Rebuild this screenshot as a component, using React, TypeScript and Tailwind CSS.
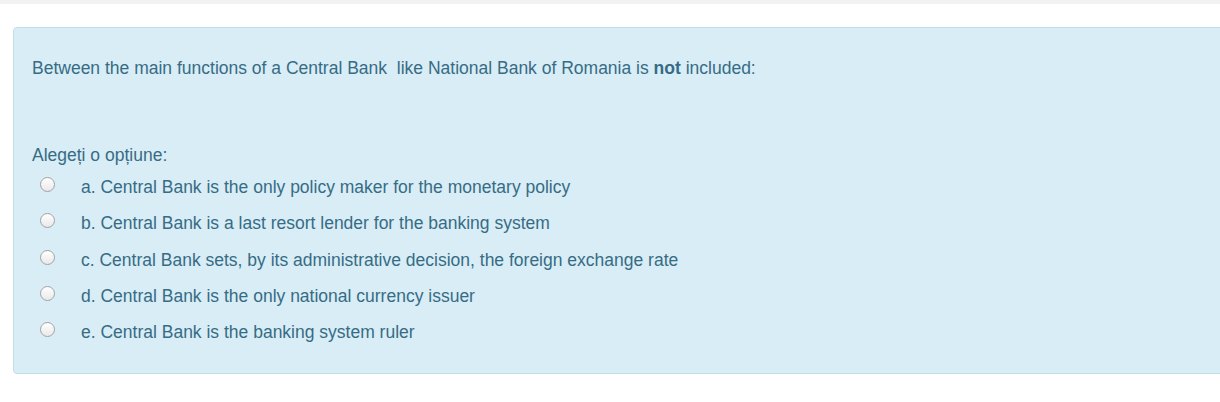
const options = [
    'a. Central Bank is the only policy maker for the monetary policy',
    'b. Central Bank is a last resort lender for the banking system',
    'c. Central Bank sets, by its administrative decision, the foreign exchange rate',
    'd. Central Bank is the only national currency issuer',
    'e. Central Bank is the banking system ruler',
];

function Radio() {
    return (
        <span className="block w-[15px] h-[15px] rounded-full border border-[#a2a2a2] bg-gradient-to-b from-[#ffffff] to-[#e9e9e9]" />
    );
}

export default function App() {
    return (
        <div className="w-[1220px] h-[402px] overflow-hidden bg-white font-['Liberation_Sans',Arial,sans-serif]">
            <div className="h-[4px] bg-[#f2f2f2]" />
            <div className="pt-[23px] pl-[13px]">
                <div className="w-[1230px] rounded-[4px] border border-[#c4dde6] bg-[#d9edf7] text-[#366c84] pt-[28px] pl-[18px] pb-[23px] text-[17.5px]">
                    <p className="leading-[24px]">
                        Between the main functions of a Central Bank&nbsp; like National Bank of Romania is <b>not</b> included:
                    </p>
                    <p className="leading-[24px] mt-[63px]">Alegeți o opțiune:</p>
                    <div className="flex flex-col mt-[2px] leading-[24px]">
                        {options.map(o => (
                            <label key={o} className="h-[36.25px] flex items-center">
                                <span className="ml-[8px] w-[41px] mb-[5px]">
                                    <Radio />
                                </span>
                                <span>{o}</span>
                            </label>
                        ))}
                    </div>
                </div>
            </div>
        </div>
    );
}
